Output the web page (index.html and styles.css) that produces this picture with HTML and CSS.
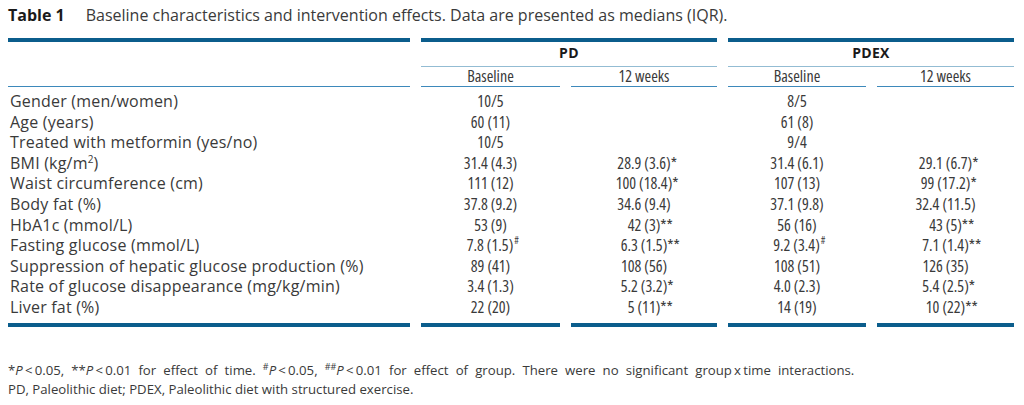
FILE: index.html
```html
<!DOCTYPE html>
<html>
<head>
<meta charset="utf-8">
<link rel="stylesheet" href="styles.css">
</head>
<body>
<div class="caption"><span class="cap-label">Table 1</span><span class="cap-text">Baseline characteristics and intervention effects. Data are presented as medians (IQR).</span></div>
<div class="tbl">
  <div class="h-label"></div>
  <div class="h-group g1">PD</div>
  <div class="h-group g2">PDEX</div>
  <div class="h-sub">Baseline</div>
  <div class="h-sub">12 weeks</div>
  <div class="h-sub">Baseline</div>
  <div class="h-sub">12 weeks</div>

  <div class="lbl">Gender (men/women)</div>
  <div class="val">10/5</div><div class="val"></div><div class="val">8/5</div><div class="val"></div>

  <div class="lbl">Age (years)</div>
  <div class="val">60 (11)</div><div class="val"></div><div class="val">61 (8)</div><div class="val"></div>

  <div class="lbl">Treated with metformin (yes/no)</div>
  <div class="val">10/5</div><div class="val"></div><div class="val">9/4</div><div class="val"></div>

  <div class="lbl">BMI (kg/m<sup>2</sup>)</div>
  <div class="val">31.4 (4.3)</div><div class="val">28.9 (3.6)<span class="s">*</span></div><div class="val">31.4 (6.1)</div><div class="val">29.1 (6.7)<span class="s">*</span></div>

  <div class="lbl">Waist circumference (cm)</div>
  <div class="val">111 (12)</div><div class="val">100 (18.4)<span class="s">*</span></div><div class="val">107 (13)</div><div class="val">99 (17.2)<span class="s">*</span></div>

  <div class="lbl">Body fat (%)</div>
  <div class="val">37.8 (9.2)</div><div class="val">34.6 (9.4)</div><div class="val">37.1 (9.8)</div><div class="val">32.4 (11.5)</div>

  <div class="lbl">HbA1c (mmol/L)</div>
  <div class="val">53 (9)</div><div class="val">42 (3)<span class="s">**</span></div><div class="val">56 (16)</div><div class="val">43 (5)<span class="s">**</span></div>

  <div class="lbl">Fasting glucose (mmol/L)</div>
  <div class="val">7.8 (1.5)<span class="h">#</span></div><div class="val">6.3 (1.5)<span class="s">**</span></div><div class="val">9.2 (3.4)<span class="h">#</span></div><div class="val">7.1 (1.4)<span class="s">**</span></div>

  <div class="lbl">Suppression of hepatic glucose production (%)</div>
  <div class="val">89 (41)</div><div class="val">108 (56)</div><div class="val">108 (51)</div><div class="val">126 (35)</div>

  <div class="lbl">Rate of glucose disappearance (mg/kg/min)</div>
  <div class="val">3.4 (1.3)</div><div class="val">5.2 (3.2)<span class="s">*</span></div><div class="val">4.0 (2.3)</div><div class="val">5.4 (2.5)<span class="s">*</span></div>

  <div class="lbl">Liver fat (%)</div>
  <div class="val">22 (20)</div><div class="val">5 (11)<span class="s">**</span></div><div class="val">14 (19)</div><div class="val">10 (22)<span class="s">**</span></div>

  <div class="foot"></div><div class="foot"></div><div class="foot"></div><div class="foot"></div><div class="foot"></div>
</div>
<div class="notes">
  <p class="n1">*<i>P</i>&thinsp;&lt;&thinsp;0.05, **<i>P</i>&thinsp;&lt;&thinsp;0.01 for effect of time. <sup>#</sup><i>P</i>&thinsp;&lt;&thinsp;0.05, <sup>##</sup><i>P</i>&thinsp;&lt;&thinsp;0.01 for effect of group. There were no significant group&thinsp;x&thinsp;time interactions.</p>
  <p>PD, Paleolithic diet; PDEX, Paleolithic diet with structured exercise.</p>
</div>
</body>
</html>
```
FILE: styles.css
```css
html, body {
  margin: 0;
  padding: 0;
  background: #ffffff;
}
body {
  font-family: "Open Sans", "DejaVu Sans", sans-serif;
  color: #3a3a3a;
  width: 1024px;
}
.caption {
  padding: 5px 0 0 8px;
  font-size: 16px;
  line-height: 20px;
  height: 20px;
  white-space: nowrap;
}
.cap-label {
  font-weight: 700;
  color: #1a1a1a;
  margin-right: 21px;
}
.cap-text {
  color: #3a3a3a;
}
.tbl {
  margin: 13px 0 0 8px;
  display: grid;
  grid-template-columns: 402px 139px 146px 138px 137px;
  column-gap: 11px;
  font-size: 16px;
}
.h-label {
  grid-column: 1;
  grid-row: 1 / 3;
  border-top: 4px solid #0b5d8c;
  border-bottom: 1px solid #3d89bb;
  margin-bottom: 4px;
}
.h-group {
  border-top: 4px solid #0b5d8c;
  border-bottom: 1px solid #93bcd3;
  font-weight: 700;
  font-size: 14px;
  line-height: 22px;
  padding-bottom: 2px;
  text-align: center;
  color: #1a1a1a;
  letter-spacing: 0.3px;
}
.g1 { grid-column: 2 / 4; grid-row: 1; }
.g2 { grid-column: 4 / 6; grid-row: 1; }
.h-sub {
  grid-row: 2;
  border-bottom: 1px solid #3d89bb;
  margin-bottom: 4px;
  line-height: 19px;
  text-align: center;
  font-size: 16px;
  font-stretch: 87%;
  color: #3a3a3a;
}
.lbl {
  grid-column: 1;
  font-size: 16px;
  letter-spacing: 0.2px;
  line-height: 20.6px;
  padding-left: 2px;
  white-space: nowrap;
}
.lbl sup {
  font-size: 10px;
  line-height: 0;
  vertical-align: 6px;
}
.val {
  line-height: 20.6px;
  height: 20.6px;
  text-align: center;
  font-stretch: 87%;
  white-space: nowrap;
}
.s {
  display: inline-block;
  width: 0;
}
.h {
  display: inline-block;
  width: 0;
  font-size: 10px;
  line-height: 10px;
  vertical-align: top;
  margin-left: 1px;
}
.foot {
  margin-top: 5px;
  border-top: 4px solid #0b5d8c;
}
.notes {
  margin: 34px 0 0 8px;
  font-size: 13.2px;
  line-height: 19px;
  font-stretch: 90%;
  color: #3a3a3a;
}
.notes p {
  margin: 0;
  white-space: nowrap;
}
.notes .n1 {
  word-spacing: 3.7px;
}
.notes sup {
  font-size: 9px;
  line-height: 0;
  vertical-align: 5px;
}
```
